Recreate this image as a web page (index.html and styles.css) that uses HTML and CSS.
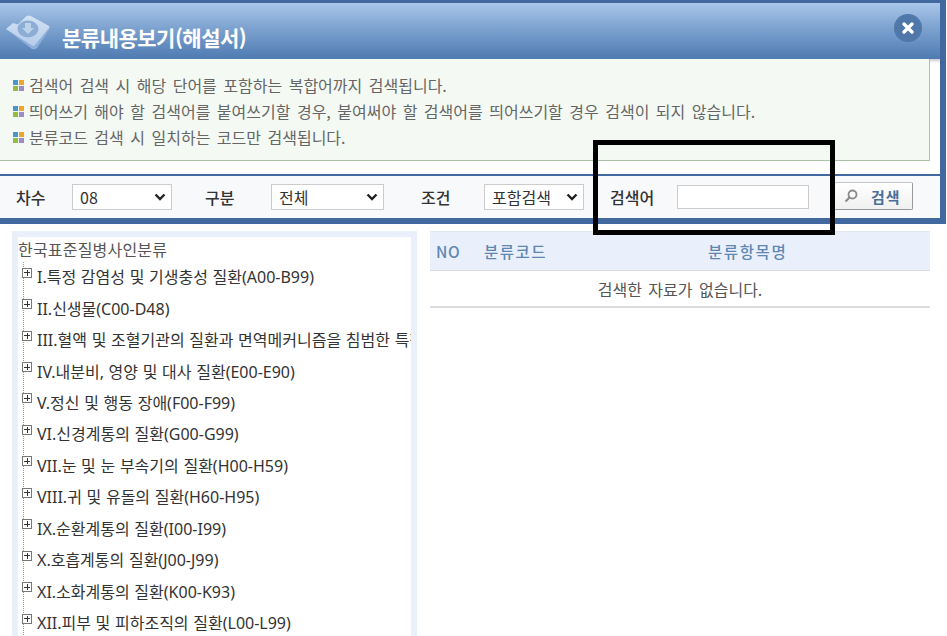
FILE: index.html
```html
<!DOCTYPE html>
<html lang="ko">
<head>
<meta charset="utf-8">
<title>분류내용보기(해설서)</title>
<link rel="stylesheet" href="styles.css">
</head>
<body>
<section class="modal">
  <header class="head">
    <svg class="logo" width="46" height="36" viewBox="0 0 46 36">
      <defs>
        <linearGradient id="lg" x1="0" y1="0" x2="0" y2="1"><stop offset="0" stop-color="#d3e2f3"/><stop offset="1" stop-color="#b4cdea"/></linearGradient>
        <filter id="sf" x="-10%" y="-10%" width="120%" height="120%"><feGaussianBlur stdDeviation="0.6"/></filter>
      </defs>
      <g filter="url(#sf)">
        <path d="M1 14 L8 8 L13 9.5 L21 1.5 Q23 0 26 1 L44 11 Q46 13 44 15 L32 33 Q30 35 27 34 Z" fill="#8fb0da"/>
        <path d="M1 14 L8 8 L13 9.5 L21 1.5 Q23 0 26 1 L44 11 Q45 12 43.5 13.5 L30 30 Q29 31.5 27 30.5 Z" fill="url(#lg)"/>
        <ellipse cx="23" cy="14" rx="10.5" ry="8.5" fill="#8dadd5"/>
        <path d="M20 8h6v5h3l-6 6-6-6h3z" fill="#bcd2ea"/>
      </g>
    </svg>
    <h1 class="title">분류내용보기(해설서)</h1>
    <button class="close" type="button"><svg width="14" height="14" viewBox="0 0 14 14"><path d="M3 3L11 11M11 3L3 11" stroke="#fff" stroke-width="3.4" stroke-linecap="round"/></svg></button>
  </header>
  <div class="info-wrap">
    <ul class="info">
      <li><i class="dots"><b></b><b></b><b></b><b></b></i>검색어 검색 시 해당 단어를 포함하는 복합어까지 검색됩니다.</li>
      <li><i class="dots"><b></b><b></b><b></b><b></b></i>띄어쓰기 해야 할 검색어를 붙여쓰기할 경우, 붙여써야 할 검색어를 띄어쓰기할 경우 검색이 되지 않습니다.</li>
      <li><i class="dots"><b></b><b></b><b></b><b></b></i>분류코드 검색 시 일치하는 코드만 검색됩니다.</li>
    </ul>
  </div>
  <form class="bar">
    <label class="lbl lbl-a">차수</label>
    <select class="sel sel-a"><option>08</option></select>
    <label class="lbl lbl-b">구분</label>
    <select class="sel sel-b"><option>전체</option></select>
    <label class="lbl lbl-c">조건</label>
    <select class="sel sel-c"><option>포함검색</option></select>
    <label class="lbl lbl-d">검색어</label>
    <input class="kw" type="text">
    <button class="go" type="button"><svg width="14" height="14" viewBox="0 0 14 14"><circle cx="8.5" cy="5.5" r="4" fill="none" stroke="#8a8a8a" stroke-width="1.8"/><path d="M5.5 8.5L1.5 12.5" stroke="#8a8a8a" stroke-width="2.2"/></svg><span>검색</span></button>
  </form>
</section>
<div class="mark"></div>
<main class="content">
  <aside class="tree">
    <h2 class="tree-title">한국표준질병사인분류</h2>
    <ul class="nodes">
      <li><i class="plus"></i>I.특정 감염성 및 기생충성 질환(A00-B99)</li>
      <li><i class="plus"></i>II.신생물(C00-D48)</li>
      <li><i class="plus"></i>III.혈액 및 조혈기관의 질환과 면역메커니즘을 침범한 특정 장애(D50-D89)</li>
      <li><i class="plus"></i>IV.내분비, 영양 및 대사 질환(E00-E90)</li>
      <li><i class="plus"></i>V.정신 및 행동 장애(F00-F99)</li>
      <li><i class="plus"></i>VI.신경계통의 질환(G00-G99)</li>
      <li><i class="plus"></i>VII.눈 및 눈 부속기의 질환(H00-H59)</li>
      <li><i class="plus"></i>VIII.귀 및 유돌의 질환(H60-H95)</li>
      <li><i class="plus"></i>IX.순환계통의 질환(I00-I99)</li>
      <li><i class="plus"></i>X.호흡계통의 질환(J00-J99)</li>
      <li><i class="plus"></i>XI.소화계통의 질환(K00-K93)</li>
      <li><i class="plus"></i>XII.피부 및 피하조직의 질환(L00-L99)</li>
    </ul>
  </aside>
  <section class="result">
    <div class="thead"><span class="c-no">NO</span><span class="c-code">분류코드</span><span class="c-name">분류항목명</span></div>
    <div class="empty">검색한 자료가 없습니다.</div>
  </section>
</main>
</body>
</html>
```
FILE: styles.css
```css
* { box-sizing: border-box; }
html, body { margin: 0; padding: 0; height: 636px; overflow: hidden; background: #fff; }
body { font-family: "Noto Sans", "Noto Sans CJK KR", sans-serif; color: #444; position: relative; }
ul { list-style: none; margin: 0; padding: 0; }
.modal { width: 946px; height: 224px; border-top: 3px solid #41699f; border-right: 6px solid #41699f; border-bottom: 6px solid #41699f; display: flex; flex-direction: column; }
.head { height: 56px; flex: none; display: flex; align-items: center; background: linear-gradient(#a9c6ea 0%, #7da2cf 45%, #4f7bb2 100%); padding: 0 18px 0 5px; }
.logo { margin-top: 3px; margin-right: 11px; flex: none; }
.title { flex: 1; margin: 11px 0 0; font-size: 21px; line-height: 28px; font-weight: 700; color: #fff; letter-spacing: -0.5px; font-family: "Noto Sans CJK KR", sans-serif; }
.close { width: 28px; height: 28px; border-radius: 50%; border: 0; padding: 0; margin-top: -7px; background: #4f77a9; display: flex; align-items: center; justify-content: center; }
.info-wrap { height: 115px; flex: none; background: linear-gradient(#ccc, #fff) top / 100% 4px no-repeat #fff; padding-right: 10px; }
.info { height: 102px; background: #f4faf3; border: solid #a9c2a4; border-width: 0 1px 1px 0; padding-top: 13px; }
.info li { height: 26px; font-size: 16px; word-spacing: 2px; line-height: 26px; color: #666; padding-left: 13px; display: flex; align-items: center; font-family: "Noto Sans CJK KR", sans-serif; }
.dots { width: 11px; height: 11px; margin-right: 5px; display: grid; grid-template-columns: 5px 5px; grid-template-rows: 5px 5px; gap: 1px; flex: none; }
.dots b:nth-child(1) { background: #4c94cc; }
.dots b:nth-child(2) { background: #eea52f; }
.dots b:nth-child(3) { background: #95bb42; }
.dots b:nth-child(4) { background: #9a8cc4; }
.bar { flex: 1; border-top: 2px solid #41699f; background: #f8f9fb; display: flex; align-items: center; font-family: "Noto Sans CJK KR", sans-serif; }
.lbl { font-size: 16px; color: #333; flex: none; font-weight: 500; }
.lbl-a { margin-left: 16px; width: 56px; }
.lbl-b { margin-left: 33px; width: 66px; }
.lbl-c { margin-left: 37px; width: 63px; }
.lbl-d { margin-left: 26px; width: 67px; }
.sel { height: 26px; border: 1px solid #ccc; border-radius: 0; appearance: none; background: #fff url("data:image/svg+xml,%3Csvg xmlns='http://www.w3.org/2000/svg' width='12' height='8' viewBox='0 0 12 8'%3E%3Cpath d='M1.5 1.5L6 6L10.5 1.5' fill='none' stroke='%23222' stroke-width='2.4'/%3E%3C/svg%3E") no-repeat right 5px center; font: 16px "Noto Sans CJK KR", sans-serif; color: #333; padding-left: 7px; flex: none; }
.sel-a { width: 100px; }
.sel-b { width: 113px; }
.sel-c { width: 100px; }
.kw { width: 132px; height: 24px; border: 1px solid #ccc; background: #fff; flex: none; }
.go { width: 79px; height: 28px; margin-left: 25px; margin-top: -2px; border: 1px solid #c5c5c5; border-bottom-color: #999; border-right-color: #999; border-radius: 2px; background: linear-gradient(#fff, #f0f0f0); color: #4a6e9c; display: flex; align-items: center; padding: 0 0 0 9px; font: 700 15px "Noto Sans CJK KR", sans-serif; flex: none; }
.go span { margin-left: 13px; letter-spacing: 1px; }
.mark { position: absolute; left: 593px; top: 140px; width: 242px; height: 95px; border: 5px solid #000; }
.content { display: flex; padding: 7px 0 0 12px; align-items: flex-start; }
.tree { width: 405px; height: 420px; border: 6px solid #e9f0fb; border-bottom: 0; flex: none; overflow: hidden; }
.tree-title { margin: 0; font-size: 16px; letter-spacing: .2px; line-height: 24px; height: 25px; font-weight: 400; color: #555; font-family: "Noto Sans CJK KR", sans-serif; }
.nodes { padding-left: 4px; background: repeating-linear-gradient(#999 0 1px, transparent 1px 2px) 5px 0 / 1px 100% no-repeat; }
.nodes li { height: 31.45px; line-height: 31px; font-size: 16px; word-spacing: .5px; white-space: nowrap; color: #333; display: flex; align-items: center; }
.plus { width: 10px; height: 10px; border: 1px solid #777; flex: none; margin: -10px 5px 0 0; background: linear-gradient(#333,#333) center/6px 1px no-repeat, linear-gradient(#333,#333) center/1px 6px no-repeat, #fff; }
.result { width: 500px; margin-left: 13px; flex: none; }
.thead { height: 40px; background: #e9f0fb; border-bottom: 1px solid #dcdcdc; border-top: 1px solid #e2e8f2; display: flex; align-items: center; color: #5f87b1; font-size: 15.5px; font-weight: 500; font-family: "Noto Sans CJK KR", sans-serif; }
.c-no { width: 54px; padding-left: 6px; letter-spacing: .5px; }
.c-code { width: 130px; letter-spacing: 1.5px; }
.c-name { margin-left: 94px; letter-spacing: 1.6px; }
.empty { height: 37px; border-bottom: 2px solid #dcdcdc; text-align: center; line-height: 36px; font-size: 16px; word-spacing: 2px; color: #555; font-family: "Noto Sans CJK KR", sans-serif; }
```
